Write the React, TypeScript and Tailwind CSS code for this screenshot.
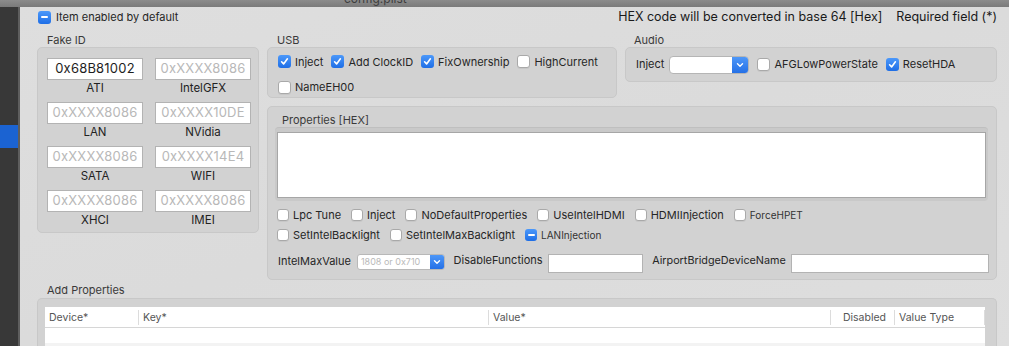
import React from 'react';

type CbState = 'on' | 'off' | 'mixed';

function Box({ state, sm = false }: { state: CbState; sm?: boolean }) {
  const size = sm ? 'w-[12px] h-[12px]' : 'w-[13px] h-[13px]';
  if (state === 'off') {
    return <span className={`${size} shrink-0 rounded-[3px] border border-[#a9a9a9] bg-white shadow-[0_1px_0_rgba(0,0,0,0.05)]`} />;
  }
  return (
    <span className={`${size} shrink-0 rounded-[3px] bg-gradient-to-b from-[#4b98fa] to-[#1e6ee6] flex items-center justify-center`}>
      {state === 'on' ? (
        <svg width="9" height="9" viewBox="0 0 9 9">
          <path d="M1.6 4.8 L3.6 6.9 L7.4 1.8" fill="none" stroke="white" strokeWidth="1.6" strokeLinecap="round" strokeLinejoin="round" />
        </svg>
      ) : (
        <span className="w-[7px] h-[2px] rounded-[1px] bg-white" />
      )}
    </span>
  );
}

function Check({ label, state = 'off', sm = false, small = false }: { label: string; state?: CbState; sm?: boolean; small?: boolean }) {
  return (
    <div className="flex items-center gap-[4px] whitespace-nowrap">
      <Box state={state} sm={sm} />
      <span className={small ? 'text-[10px] text-[#333]' : 'text-[11px] text-[#262626]'}>{label}</span>
    </div>
  );
}

function Chevron() {
  return (
    <svg width="8" height="6" viewBox="0 0 8 6">
      <path d="M1.5 1.8 L4 4.2 L6.5 1.8" fill="none" stroke="white" strokeWidth="1.4" strokeLinecap="round" strokeLinejoin="round" />
    </svg>
  );
}

function FakeField({ value, placeholder, label }: { value?: string; placeholder: string; label: string }) {
  return (
    <div className="flex flex-col items-center">
      <div className="w-[96px] h-[22px] bg-white border border-[#b3b3b3] flex items-center justify-center text-[13px] tracking-[0.2px]">
        {value ? <span className="text-[#1e1e1e]">{value}</span> : <span className="text-[#b8b8b8]">{placeholder}</span>}
      </div>
      <div className="mt-[1px] h-[14px] leading-[14px] text-[11.5px] text-[#222]">{label}</div>
    </div>
  );
}

const fakeIds = [
  { value: '0x68B81002', placeholder: '', label: 'ATI' },
  { placeholder: '0xXXXX8086', label: 'IntelGFX' },
  { placeholder: '0xXXXX8086', label: 'LAN' },
  { placeholder: '0xXXXX10DE', label: 'NVidia' },
  { placeholder: '0xXXXX8086', label: 'SATA' },
  { placeholder: '0xXXXX14E4', label: 'WIFI' },
  { placeholder: '0xXXXX8086', label: 'XHCI' },
  { placeholder: '0xXXXX8086', label: 'IMEI' },
];

export default function App() {
  return (
    <div className="w-[1009px] h-[346px] overflow-hidden flex flex-col bg-[#dddddd] font-['Inter','Noto_Sans',sans-serif] text-[#262626]">
      {/* window title strip, mostly cut off */}
      <div className="h-[7px] shrink-0 overflow-hidden bg-gradient-to-b from-[#8c8c8c] to-[#7a7a7a]">
        <div className="pl-[344px] -mt-[8px] text-[12px] leading-[14px] text-[#3d3d3d]">config.plist</div>
      </div>

      <div className="flex flex-1 min-h-0">
        {/* sidebar */}
        <div className="w-[18px] shrink-0 bg-[#383838] flex flex-col">
          <div className="mt-[118px] h-[23px] bg-[#1b63d2]" />
        </div>
        <div className="w-[2px] shrink-0 bg-[#5e5e5e]" />

        {/* main pane */}
        <div className="w-[989px] shrink-0 flex flex-col pl-[17px] pr-[12px] bg-gradient-to-br from-[#dedede] via-[#dbdbdb] to-[#dedede]">
          {/* header row */}
          <div className="h-[20px] flex items-center justify-between">
            <div className="flex items-center gap-[5px] pl-[1px]">
              <Box state="mixed" />
              <span className="text-[11px] text-[#262626]">Item enabled by default</span>
            </div>
            <div className="flex items-center gap-[14px] text-[12.5px] text-[#1a1a1a] whitespace-nowrap">
              <span>HEX code will be converted in base 64 [Hex]</span>
              <span>Required field (*)</span>
            </div>
          </div>

          <div className="flex gap-[8px] mt-[6px]">
            {/* Fake ID */}
            <div className="w-[222px] shrink-0 flex flex-col">
              <div className="h-[14px] leading-[14px] pl-[10px] text-[11px] text-[#3a3a3a]">Fake ID</div>
              <div className="h-[186px] rounded-[5px] bg-[#d2d2d2] border border-[#c8c8c8] pt-[10px] pl-[9px]">
                <div className="grid grid-cols-[96px_96px] gap-x-[12px] gap-y-[7px]">
                  {fakeIds.map((f) => (
                    <FakeField key={f.label} value={f.value} placeholder={f.placeholder} label={f.label} />
                  ))}
                </div>
              </div>
            </div>

            {/* right column */}
            <div className="w-[730px] shrink-0 flex flex-col">
              <div className="flex gap-[8px]">
                {/* USB */}
                <div className="w-[350px] shrink-0 flex flex-col">
                  <div className="h-[14px] leading-[14px] pl-[10px] text-[11px] text-[#3a3a3a]">USB</div>
                  <div className="h-[51px] rounded-[5px] bg-[#d2d2d2] border border-[#c8c8c8] pl-[10px] pt-[4px] flex flex-col gap-[6px]">
                    <div className="h-[20px] flex items-center gap-[8px]">
                      <Check label="Inject" state="on" />
                      <Check label="Add ClockID" state="on" />
                      <Check label="FixOwnership" state="on" />
                      <Check label="HighCurrent" />
                    </div>
                    <div className="h-[20px] flex items-center">
                      <Check label="NameEH00" />
                    </div>
                  </div>
                </div>

                {/* Audio */}
                <div className="flex-1 flex flex-col">
                  <div className="h-[14px] leading-[14px] pl-[9px] text-[11px] text-[#3a3a3a]">Audio</div>
                  <div className="h-[35px] rounded-[5px] bg-[#d2d2d2] border border-[#c8c8c8] pl-[10px] flex items-center">
                    <span className="text-[11px] text-[#262626]">Inject</span>
                    <div className="ml-[5px] w-[80px] h-[18px] flex rounded-[4px] border border-[#b5b5b5] bg-white overflow-hidden">
                      <div className="flex-1" />
                      <div className="w-[16px] bg-gradient-to-b from-[#4d97f8] to-[#2570e6] flex items-center justify-center">
                        <Chevron />
                      </div>
                    </div>
                    <div className="ml-[8px] flex items-center gap-[8px]">
                      <Check label="AFGLowPowerState" />
                      <Check label="ResetHDA" state="on" />
                    </div>
                  </div>
                </div>
              </div>

              {/* Properties */}
              <div className="mt-[8px] h-[174px] rounded-[5px] bg-[#d2d2d2] border border-[#c8c8c8] flex flex-col px-[7px]">
                <div className="mt-[6px] h-[14px] leading-[14px] pl-[7px] text-[11px] text-[#3a3a3a]">Properties [HEX]</div>
                <div className="rounded-[4px] bg-[#c9c9c9] border-t border-[#bfbfbf] pt-[4px] pb-[3px] px-[2px] mr-[1px]">
                  <div className="h-[66px] bg-white border border-[#a6a6a6]" />
                </div>
                <div className="pl-[2px] flex flex-col">
                  <div className="mt-[4px] h-[20px] flex items-center gap-[10px]">
                    <Check label="Lpc Tune" sm />
                    <Check label="Inject" sm />
                    <Check label="NoDefaultProperties" sm />
                    <Check label="UseIntelHDMI" sm />
                    <Check label="HDMIInjection" sm />
                    <Check label="ForceHPET" sm small />
                  </div>
                  <div className="h-[20px] flex items-center gap-[10px]">
                    <Check label="SetIntelBacklight" sm />
                    <Check label="SetIntelMaxBacklight" sm />
                    <Check label="LANInjection" state="mixed" sm small />
                  </div>
                  <div className="mt-[5px] h-[23px] flex items-center whitespace-nowrap">
                    <span className="pl-[1px] text-[11px] text-[#262626]">IntelMaxValue</span>
                    <div className="ml-[6px] w-[88px] h-[16px] flex rounded-[3px] border border-[#b8b8b8] bg-white overflow-hidden">
                      <span className="flex-1 pl-[3px] text-[9px] leading-[14px] text-[#b9b9b9]">1808 or 0x710</span>
                      <div className="w-[14px] bg-gradient-to-b from-[#4d97f8] to-[#2570e6] flex items-center justify-center">
                        <Chevron />
                      </div>
                    </div>
                    <span className="ml-[9px] text-[11px] text-[#262626] self-start mt-[2px]">DisableFunctions</span>
                    <div className="ml-[5px] w-[96px] h-[19px] mt-[3px] bg-white border border-[#b3b3b3]" />
                    <span className="ml-[9px] text-[10.8px] text-[#262626]">AirportBridgeDeviceName</span>
                    <div className="ml-[5px] w-[199px] h-[19px] mt-[3px] bg-white border border-[#b3b3b3]" />
                  </div>
                </div>
              </div>
            </div>
          </div>

          {/* Add Properties */}
          <div className="mt-[3px] h-[14px] leading-[14px] pl-[10px] text-[11px] text-[#3a3a3a]">Add Properties</div>
          <div className="mt-[1px] flex-1 rounded-t-[5px] bg-[#d2d2d2] border border-b-0 border-[#c8c8c8] pt-[8px] pl-[7px] pr-[11px]">
            <div className="bg-white h-full flex flex-col">
              <div className="h-[21px] flex items-center text-[10.5px] text-[#555] border-b border-[#d6d6d6] whitespace-nowrap">
                <div className="w-[94px] pl-[4px] border-r border-[#dcdcdc] h-[15px] leading-[15px]">Device*</div>
                <div className="w-[350px] pl-[4px] border-r border-[#dcdcdc] h-[15px] leading-[15px]">Key*</div>
                <div className="w-[342px] pl-[4px] border-r border-[#dcdcdc] h-[15px] leading-[15px]">Value*</div>
                <div className="w-[64px] pr-[8px] text-right border-r border-[#dcdcdc] h-[15px] leading-[15px]">Disabled</div>
                <div className="w-[90px] pl-[4px] border-r border-[#dcdcdc] h-[15px] leading-[15px]">Value Type</div>
              </div>
              <div className="h-[15px] bg-white" />
              <div className="flex-1 bg-[#f3f3f3]" />
            </div>
          </div>
        </div>
      </div>
    </div>
  );
}
